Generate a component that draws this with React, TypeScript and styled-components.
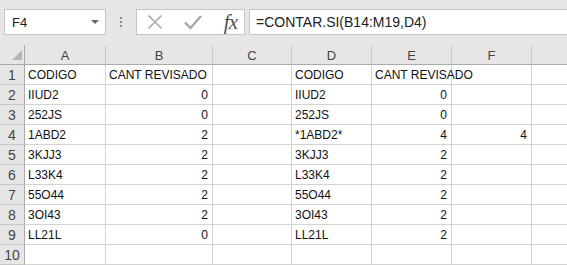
import React from "react";
import styled, { createGlobalStyle } from "styled-components";

const GlobalStyle = createGlobalStyle`
html, body {
  margin: 0;
  padding: 0;
  background: #ffffff;
  overflow: hidden;
}
`;

// last column sits past the window edge, so its letter isn't shown
const columns = ["A", "B", "C", "D", "E", "F", ""];

// each row: [A, B, C, D, E, F]
const rows: string[][] = [
  ["CODIGO", "CANT REVISADO", "", "CODIGO", "CANT REVISADO", ""],
  ["IIUD2", "0", "", "IIUD2", "0", ""],
  ["252JS", "0", "", "252JS", "0", ""],
  ["1ABD2", "2", "", "*1ABD2*", "4", "4"],
  ["3KJJ3", "2", "", "3KJJ3", "2", ""],
  ["L33K4", "2", "", "L33K4", "2", ""],
  ["55O44", "2", "", "55O44", "2", ""],
  ["3OI43", "2", "", "3OI43", "2", ""],
  ["LL21L", "0", "", "LL21L", "2", ""],
  ["", "", "", "", "", ""],
];

const isNumber = (v: string) => /^\d+$/.test(v);

const App = () => {
  return (
    <>
      <GlobalStyle />
      <Window>
        <FormulaBar>
          <NameBox>
            <NameText>F4</NameText>
            <DropArrow />
          </NameBox>
          <Grip>
            <Dot />
            <Dot />
            <Dot />
          </Grip>
          <FxButtons>
            <svg width="16" height="16" viewBox="0 0 16 16">
              <path d="M1.5 1.5 L14.5 14.5 M14.5 1.5 L1.5 14.5" stroke="#a8a8a8" strokeWidth="1.6" fill="none" />
            </svg>
            <svg width="18" height="16" viewBox="0 0 18 16">
              <path d="M1 8.5 L6.5 14 L17 2" stroke="#a8a8a8" strokeWidth="2.4" fill="none" />
            </svg>
            <Fx>fx</Fx>
          </FxButtons>
          <FormulaInput>=CONTAR.SI(B14:M19,D4)</FormulaInput>
        </FormulaBar>

        <Sheet>
          <Corner>
            <svg width="10" height="10" viewBox="0 0 10 10">
              <polygon points="10,0 10,10 0,10" fill="#b5b5b5" />
            </svg>
          </Corner>
          {columns.map((c, i) => (
            <ColHead key={i}>{c}</ColHead>
          ))}
          {rows.map((r, i) => (
            <React.Fragment key={i}>
              <RowHead>{i + 1}</RowHead>
              {r.map((v, j) => (
                <Cell key={j} $num={isNumber(v)}>
                  {v}
                </Cell>
              ))}
              <Cell $num={false} />
            </React.Fragment>
          ))}
        </Sheet>
      </Window>
    </>
  );
};

export default App;

const Window = styled.div`
width: 567px;
height: 265px;
background: #e6e6e6;
font-family: "Liberation Sans", Arial, sans-serif;
overflow: hidden;
`;

const FormulaBar = styled.div`
display: flex;
align-items: center;
height: 45px;
padding: 0 0 1px 4px;
box-sizing: border-box;
`;

const NameBox = styled.div`
width: 102px;
height: 26px;
box-sizing: border-box;
background: #fff;
border: 1px solid #c6c6c6;
display: flex;
align-items: center;
justify-content: space-between;
padding: 0 6px 0 7px;
`;

const NameText = styled.span`
font-size: 13px;
color: #222;
`;

const DropArrow = styled.span`
width: 0;
height: 0;
border-left: 4px solid transparent;
border-right: 4px solid transparent;
border-top: 4px solid #6a6a6a;
`;

const Grip = styled.div`
width: 30px;
display: flex;
flex-direction: column;
align-items: center;
gap: 2px;
`;

const Dot = styled.span`
width: 2px;
height: 2px;
background: #8a8a8a;
`;

const FxButtons = styled.div`
width: 109px;
height: 26px;
box-sizing: border-box;
background: #fff;
border: 1px solid #c6c6c6;
display: flex;
align-items: center;
justify-content: space-between;
padding: 0 7px 0 10px;
`;

const Fx = styled.span`
font-family: "Liberation Serif", "Times New Roman", serif;
font-style: italic;
font-size: 21px;
color: #505050;
letter-spacing: -1px;
`;

const FormulaInput = styled.div`
flex: 1;
height: 26px;
margin-left: 4px;
box-sizing: border-box;
background: #fff;
border: 1px solid #c6c6c6;
border-right: none;
display: flex;
align-items: center;
padding-left: 6px;
font-size: 14px;
color: #222;
white-space: nowrap;
`;

const Sheet = styled.div`
display: grid;
grid-template-columns: 25px 81px 107px 79px 80px 80px 80px 80px;
grid-auto-rows: 20px;
background: #fff;
`;

const HeadBase = styled.div`
box-sizing: border-box;
background: #e6e6e6;
color: #444;
font-size: 13px;
display: flex;
align-items: center;
justify-content: center;
`;

const Corner = styled(HeadBase)`
justify-content: flex-end;
align-items: flex-end;
padding: 0 2px 4px 0;
border-right: 1px solid #ababab;
border-bottom: 1px solid #ababab;
`;

const ColHead = styled(HeadBase)`
border-right: 1px solid #c8c8c8;
border-bottom: 1px solid #ababab;
padding-top: 1px;
`;

const RowHead = styled(HeadBase)`
border-right: 1px solid #ababab;
border-bottom: 1px solid #c8c8c8;
font-size: 14px;
`;

const Cell = styled.div<{ $num: boolean }>`
box-sizing: border-box;
border-right: 1px solid #d4d4d4;
border-bottom: 1px solid #d4d4d4;
font-size: 12px;
color: #111;
display: flex;
align-items: center;
justify-content: ${(p) => (p.$num ? "flex-end" : "flex-start")};
padding: 1px 4px 0 3px;
white-space: nowrap;
overflow: visible;
`;
